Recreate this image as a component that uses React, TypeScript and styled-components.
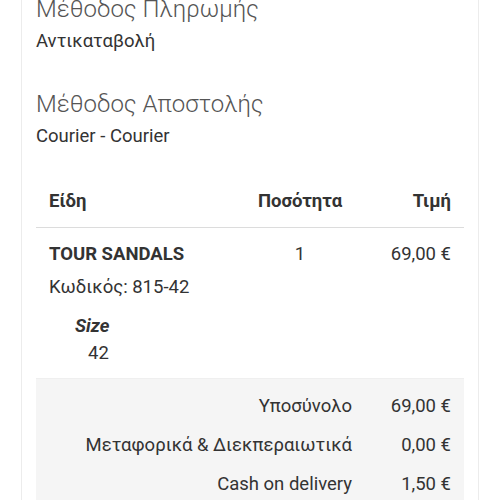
import React from "react";
import styled, { createGlobalStyle } from "styled-components";

const GlobalStyle = createGlobalStyle`
  html, body {
    margin: 0;
    padding: 0;
    background: #ffffff;
    overflow: hidden;
  }
  body {
    font-family: Roboto, "Noto Sans", "Liberation Sans", sans-serif;
    color: #333333;
  }
`;

// page is shown scrolled a little, so the first title sits under the top edge
const Page = styled.div`
  margin-top: -22px;
  padding: 0 21px;
`;

const Card = styled.div`
  border: 1px solid #ececec;
  background: #ffffff;
  padding: 15px 14px 20px 14px;
`;

const Section = styled.section`
  & + & {
    margin-top: 36px;
  }
`;

const SectionTitle = styled.h3`
  margin: 0 0 5px 0;
  font-size: 24px;
  line-height: 30px;
  font-weight: 300;
  color: #555555;
`;

const SectionValue = styled.div`
  font-size: 18.5px;
  line-height: 24px;
  color: #333333;
`;

const Table = styled.div`
  margin-top: 26px;
`;

const Row = styled.div<{ $head?: boolean }>`
  display: grid;
  grid-template-columns: 1fr 120px 91px;
  border-bottom: 1px solid ${(p) => (p.$head ? "#dcdcdc" : "#efefef")};
  padding: ${(p) => (p.$head ? "15px 13px 14px" : "14px 13px 13px")};
  font-size: 18.5px;
  line-height: 24px;
`;

const HeadCell = styled.div<{ $align?: string }>`
  font-weight: 700;
  color: #333333;
  text-align: ${(p) => p.$align || "left"};
`;

const Cell = styled.div<{ $align?: string }>`
  text-align: ${(p) => p.$align || "left"};
  color: #333333;
`;

const ItemName = styled.div`
  font-weight: 700;
  text-transform: uppercase;
`;

const ItemSku = styled.div`
  margin-top: 9px;
`;

const Options = styled.dl`
  margin: 15px 0 0 26px;
`;

const OptionLabel = styled.dt`
  font-weight: 700;
  font-style: italic;
`;

const OptionValue = styled.dd`
  margin: 3px 0 0 13px;
`;

const Totals = styled.div`
  background: #f5f5f5;
  padding: 15px 13px 12px;
  display: grid;
  grid-template-columns: 1fr 99px;
  row-gap: 15px;
  font-size: 18.5px;
  line-height: 24px;
`;

const TotalLabel = styled.div`
  text-align: right;
`;

const TotalValue = styled.div`
  text-align: right;
`;

const totals = [
  ["Υποσύνολο", "69,00 €"],
  ["Μεταφορικά & Διεκπεραιωτικά", "0,00 €"],
  ["Cash on delivery", "1,50 €"],
];

export default function App() {
  return (
    <Page>
      <GlobalStyle />
      <Card>
        <Section>
          <SectionTitle>Μέθοδος Πληρωμής</SectionTitle>
          <SectionValue>Αντικαταβολή</SectionValue>
        </Section>
        <Section>
          <SectionTitle>Μέθοδος Αποστολής</SectionTitle>
          <SectionValue>Courier - Courier</SectionValue>
        </Section>
        <Table>
          <Row $head>
            <HeadCell>Είδη</HeadCell>
            <HeadCell $align="center">Ποσότητα</HeadCell>
            <HeadCell $align="right">Τιμή</HeadCell>
          </Row>
          <Row>
            <Cell>
              <ItemName>Tour Sandals</ItemName>
              <ItemSku>Κωδικός: 815-42</ItemSku>
              <Options>
                <OptionLabel>Size</OptionLabel>
                <OptionValue>42</OptionValue>
              </Options>
            </Cell>
            <Cell $align="center">1</Cell>
            <Cell $align="right">69,00 €</Cell>
          </Row>
          <Totals>
            {totals.map(([label, value]) => (
              <React.Fragment key={label}>
                <TotalLabel>{label}</TotalLabel>
                <TotalValue>{value}</TotalValue>
              </React.Fragment>
            ))}
          </Totals>
        </Table>
      </Card>
    </Page>
  );
}
